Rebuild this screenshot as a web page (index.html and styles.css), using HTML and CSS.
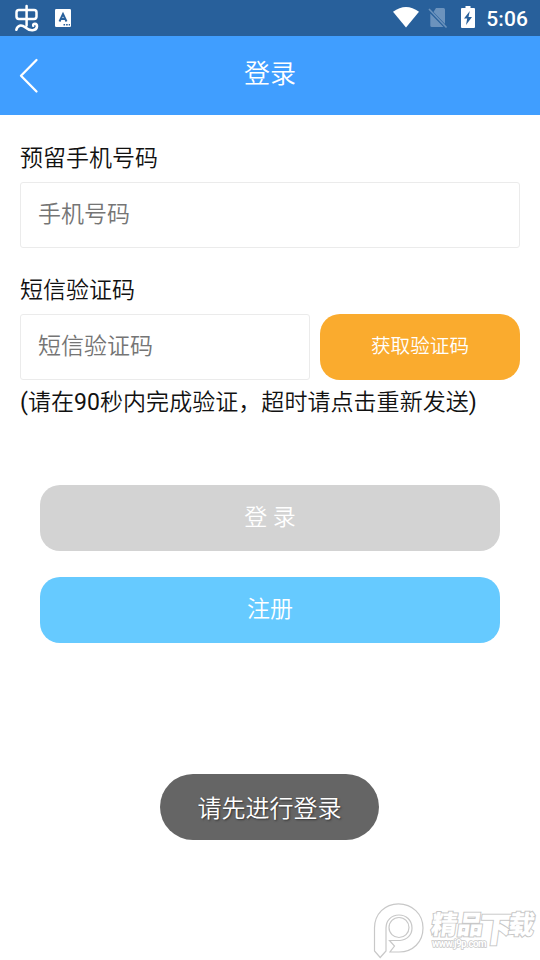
FILE: index.html
```html
<!DOCTYPE html>
<html lang="zh-CN">
<head>
<meta charset="utf-8">
<title>登录</title>
<link rel="stylesheet" href="styles.css">
</head>
<body>
<div class="screen">
  <div class="status">
    <svg class="bug" width="26" height="28" viewBox="0 0 26 28" fill="none" stroke="#fff" stroke-width="2.500" stroke-linecap="round" stroke-linejoin="round">
      <rect x="2.500" y="6" width="20" height="9" rx="2.400"/>
      <path d="M12.600 2V21.500M2.300 25.800C3.500 21.500 7 20 11.500 23.500C16 27.500 22.500 27 23 22.500C23.200 19 18.500 19 19.200 21.800"/>
    </svg>
    <svg class="lang" width="16" height="18" viewBox="0 0 16 18">
      <rect width="16" height="18" rx="1.200" fill="#fff"/>
      <path d="M4.500 12.500L8 5L11.500 12.500M5.600 10H10.400" fill="none" stroke="#28609b" stroke-width="2"/>
      <path d="M8.500 15.800H15" stroke="#28609b" stroke-width="1.400" stroke-dasharray="1.600 1"/>
    </svg>
    <div class="status-right">
      <svg class="wifi" width="26" height="21" viewBox="0 0 26 21"><path d="M0 4.700Q13-4.700 26 4.700L13 20.500Z" fill="#fff"/></svg>
      <svg class="sim" width="20" height="22" viewBox="0 0 20 22">
        <path d="M8 1H15.500Q17 1 17 2.500V17L5.500 5ZM2.300 6.500L15.500 20H3.800Q2.300 20 2.300 18.500Z" fill="#6c93bd"/>
        <path d="M1 2L18.500 20.500" stroke="#6c93bd" stroke-width="1.600"/>
      </svg>
      <svg class="battery" width="14" height="22" viewBox="0 0 14 22">
        <path d="M4.500 0H9.500V2H13Q14 2 14 3V21Q14 22 13 22H1Q0 22 0 21V3Q0 2 1 2H4.500Z" fill="#fff"/>
        <path d="M8.800 5L3 12.500H6.200L5 19L11 11H7.500Z" fill="#28609b"/>
      </svg>
      <span class="clock">5:06</span>
    </div>
  </div>
  <header class="header">
    <svg class="back" width="20" height="36" viewBox="0 0 20 36"><path d="M17.500 2L2 17.800L17.500 33.500" fill="none" stroke="#fff" stroke-width="2.300" stroke-linecap="round" stroke-linejoin="round"/></svg>
    <h1 class="title">登录</h1>
  </header>
  <main class="form">
    <label class="label" for="phone">预留手机号码</label>
    <input class="field" id="phone" placeholder="手机号码">
    <label class="label label-code" for="code">短信验证码</label>
    <div class="row">
      <input class="field" id="code" placeholder="短信验证码">
      <button class="btn btn-code">获取验证码</button>
    </div>
    <p class="hint"><span class="num">(</span>请在<span class="num">90</span>秒内完成验证，超时请点击重新发送<span class="num">)</span></p>
    <div class="actions">
      <button class="btn btn-login">登 录</button>
      <button class="btn btn-register">注册</button>
    </div>
  </main>
  <div class="toast">请先进行登录</div>
  <div class="watermark">
    <svg class="mark" width="52" height="58" viewBox="0 0 52 58" fill="none" stroke="#c8c8c8" stroke-width="1.200">
      <path d="M1.500 48V25C1.500 11 12 .8 25.500 .8C39 .8 50 11 50 25C50 39 40 49 26 49H17L21.500 43L16.500 37.500H27C34 37 39 32 39 25C39 17 33 12 26 12C18 12 13 18 13 25V48L7.200 54.500Z"/>
      <circle cx="26" cy="24.500" r="10"/>
    </svg>
    <div class="words">
      <div class="name"><span>精品</span><span class="big">下</span><span>载</span></div>
      <div class="site">www.j9p.com</div>
    </div>
  </div>
</div>
</body>
</html>
```
FILE: styles.css
```css
* { box-sizing: border-box; }
body {
  margin: 0;
  background: #fff;
  font-family: Roboto, "Noto Sans CJK SC", sans-serif;
  font-weight: 350;
  color: #111;
}
input, button { font: inherit; margin: 0; }
.screen {
  position: relative;
  width: 540px;
  height: 960px;
  overflow: hidden;
  display: flex;
  flex-direction: column;
}
.status {
  height: 36px;
  flex: none;
  background: #28609b;
  display: flex;
  align-items: center;
  padding: 0 12px 0 14px;
}
.lang { margin-left: 15px; }
.status-right { margin-left: auto; display: flex; align-items: center; }
.wifi { margin-top: -2px; }
.sim { margin-left: 9px; }
.battery { margin: -2px 11px 0 13px; }
.clock { color: #fff; font-size: 21px; font-weight: 500; line-height: 34px; letter-spacing: 0.1px; padding-top: 2px; }
.header {
  height: 79px;
  flex: none;
  background: #409eff;
  display: grid;
  grid-template-columns: 60px 1fr 60px;
  align-items: center;
  color: #fff;
}
.back { margin-left: 19px; }
.title {
  margin: 0;
  font-size: 26px;
  font-weight: 350;
  line-height: 40px;
  padding-bottom: 3px;
  text-align: center;
}
.form { padding: 28px 20px 0; display: flex; flex-direction: column; }
.label { font-size: 23px; line-height: 32px; height: 39px; }
.label-code { margin-top: 27px; }
.field {
  width: 100%;
  min-width: 0;
  height: 66px;
  border: 1px solid #ebebeb;
  border-radius: 3px;
  background: #fff;
  padding: 0 17px 1px;
  font-size: 23px;
  outline: none;
}
.field::placeholder { color: #757575; opacity: 1; }
.row { display: grid; grid-template-columns: 290px 200px; gap: 10px; }
.btn {
  height: 66px;
  border: 0;
  border-radius: 20px;
  color: #fff;
  font-size: 23px;
  padding: 0 0 6px;
}
.btn-code { background: #faab2e; font-size: 19.6px; padding-bottom: 5px; }
.hint { margin: 7px 0 0; font-size: 23px; line-height: 32px; white-space: nowrap; letter-spacing: 0.05px; }
.num { font-weight: 400; }
.actions { padding: 66px 20px 0; display: flex; flex-direction: column; gap: 26px; }
.btn-login { background: #d3d3d3; }
.btn-register { background: #66caff; }
.toast {
  align-self: center;
  margin: 131px 2px 0 0;
  width: 219px;
  height: 66px;
  border-radius: 33px;
  background: #656565;
  color: #fff;
  font-size: 24px;
  line-height: 70px;
  padding-left: 1px;
  text-align: center;
  text-shadow: 1px 1px 2px #333;
}
.watermark {
  position: absolute;
  left: 373px;
  top: 903px;
  display: flex;
  color: #fff;
}
.words { margin-left: 7px; width: 110px; }
.name {
  display: flex;
  font-size: 26px;
  line-height: 34px;
  height: 36px;
  padding-top: 5px;
  font-weight: 900;
  transform: skewX(-8deg);
  -webkit-text-stroke: 2px #c8c8c8;
  paint-order: stroke fill;
}
.big { font-size: 35px; line-height: 46px; margin: 0 -6px 0 -4px; }
.site {
  font-size: 10px;
  line-height: 10px;
  letter-spacing: -0.6px;
  font-weight: 700;
  -webkit-text-stroke: 1.4px #c8c8c8;
  paint-order: stroke fill;
}
```
